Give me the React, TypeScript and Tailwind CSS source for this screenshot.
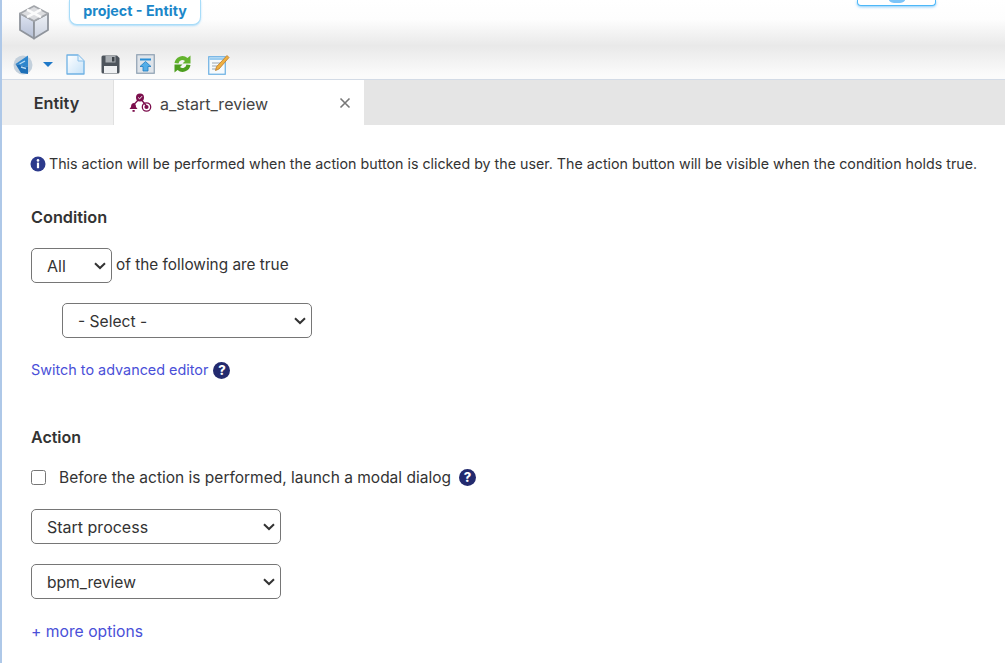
// Entity editor: header with toolbar, tab strip, and the action form below.

import type { ReactNode } from "react";

const inter = "font-['Inter','Noto_Sans',sans-serif]";

function BoxLogo() {
  return (
    <svg width="32" height="35" viewBox="0 0 32 35" aria-hidden>
      <defs>
        <linearGradient id="boxL" x1="0" y1="0" x2="0" y2="1">
          <stop offset="0" stopColor="#dfe5f2" />
          <stop offset="1" stopColor="#b4bed4" />
        </linearGradient>
        <linearGradient id="boxR" x1="0" y1="0" x2="0" y2="1">
          <stop offset="0" stopColor="#eef1f6" />
          <stop offset="1" stopColor="#cad1df" />
        </linearGradient>
      </defs>
      <path d="M16 16 L2 8.5 V25 L16 33.5 Z" fill="url(#boxL)" stroke="#8f949c" strokeWidth="1.8" strokeLinejoin="round" />
      <path d="M16 16 L30 8.5 V25 L16 33.5 Z" fill="url(#boxR)" stroke="#8f949c" strokeWidth="1.8" strokeLinejoin="round" />
      <path d="M2 8.5 L16 1 L30 8.5 L16 16 Z" fill="#dcdde0" stroke="#a3a6ab" strokeWidth="1.6" strokeLinejoin="round" />
      <path d="M9 4.7 L23 12.2 M23 4.7 L9 12.2" stroke="#fbfbfb" strokeWidth="2.6" />
    </svg>
  );
}

function BackIcon() {
  return (
    <svg width="20" height="21" viewBox="0 0 20 21" aria-hidden>
      <circle cx="10" cy="11" r="9.5" fill="#c3d0dc" />
      <path d="M15 1.5 L2.5 10 L15 13 Z" fill="#2e86cd" />
      <path d="M2.5 10 L15 13 V20 L8 19 Z" fill="#1d6fb8" />
      <path d="M6.5 10 L12 7 M8 13 L13 14.5" stroke="#b9dcf4" strokeWidth="1.4" />
    </svg>
  );
}

function PageIcon() {
  return (
    <svg width="19" height="21" viewBox="0 0 19 21" aria-hidden>
      <defs>
        <linearGradient id="page" x1="0" y1="0" x2="1" y2="1">
          <stop offset="0" stopColor="#ffffff" />
          <stop offset="1" stopColor="#c6e2f8" />
        </linearGradient>
      </defs>
      <path d="M1 1 H12 L18 7 V20 H1 Z" fill="url(#page)" stroke="#6fb1e4" strokeWidth="1.3" strokeLinejoin="round" />
      <path d="M12 1 V7 H18" fill="#e6f2fb" stroke="#8cc1ea" strokeWidth="1" />
    </svg>
  );
}

function SaveIcon() {
  return (
    <svg width="19" height="19" viewBox="0 0 19 19" aria-hidden>
      <path d="M0.5 2 Q0.5 0.5 2 0.5 H16 L18.5 3 V17 Q18.5 18.5 17 18.5 H2 Q0.5 18.5 0.5 17 Z" fill="#4d545c" />
      <rect x="4.5" y="1" width="10" height="6.5" fill="#a9aeb3" />
      <rect x="11" y="2" width="2.5" height="4.5" fill="#3d4349" />
      <rect x="3" y="11" width="13" height="7" fill="#eef0f2" />
    </svg>
  );
}

function PublishIcon() {
  return (
    <svg width="19" height="20" viewBox="0 0 19 20" aria-hidden>
      <rect x="0.75" y="0.75" width="17.5" height="18.5" fill="#dfe4ea" stroke="#8ea0b2" strokeWidth="1.2" />
      <rect x="4" y="4.5" width="11" height="2" fill="#2b8fd6" />
      <path d="M9.5 7.5 L15 12.5 H12 V17 H7 V12.5 H4 Z" fill="#54aee8" stroke="#1f7cc2" strokeWidth="0.8" />
    </svg>
  );
}

function RefreshIcon() {
  return (
    <svg width="19" height="18" viewBox="0 0 19 18" aria-hidden>
      <path d="M1.5 8 A8 8 0 0 1 14.5 3 L17.5 0.5 V8.5 H9.5 L12 6 A4 4 0 0 0 5.5 8.5 Z" fill="#63b32e" />
      <path d="M17.5 10 A8 8 0 0 1 4.5 15 L1.5 17.5 V9.5 H9.5 L7 12 A4 4 0 0 0 13.5 9.5 Z" fill="#4d9e1f" />
    </svg>
  );
}

function NoteIcon() {
  return (
    <svg width="22" height="21" viewBox="0 0 22 21" aria-hidden>
      <rect x="0.75" y="2.75" width="16.5" height="17.5" fill="#f6fafd" stroke="#69aee2" strokeWidth="1.2" />
      <rect x="1.5" y="3.5" width="15" height="2.5" fill="#9ccdf0" />
      <path d="M4 9 H12 M4 12 H10 M4 15 H9" stroke="#9aa7b2" strokeWidth="1" />
      <path d="M19 1.5 L21 3.5 L11 15 L7.5 16.5 L8.5 12.8 Z" fill="#f0b040" stroke="#b9792a" strokeWidth="0.8" strokeLinejoin="round" />
    </svg>
  );
}

function ActionIcon() {
  return (
    <svg width="24" height="20" viewBox="0 0 24 20" aria-hidden>
      <path d="M12 5 L5.5 12 M12 5 L18.5 13" stroke="#7c0f4d" strokeWidth="1.3" />
      <circle cx="12" cy="4.5" r="4" fill="#7c0f4d" />
      <path d="M10.2 4.5 L11.6 5.9 L14 3.2" stroke="#fff" strokeWidth="1" fill="none" />
      <path d="M5.5 10 Q8 10.5 8 14 L9.5 16 H1.5 L3 14 Q3 10.5 5.5 10 Z" fill="#7c0f4d" />
      <rect x="4.5" y="17" width="2.2" height="1.8" fill="#7c0f4d" />
      <circle cx="18.5" cy="14" r="4.2" fill="none" stroke="#7c0f4d" strokeWidth="1.3" />
      <circle cx="18.5" cy="14" r="2.1" fill="#7c0f4d" />
    </svg>
  );
}

function InfoDot() {
  return (
    <svg width="16" height="16" viewBox="0 0 16 16" aria-hidden>
      <circle cx="8" cy="8" r="7.5" fill="#2c3a8c" />
      <circle cx="8" cy="4.4" r="1.3" fill="#fff" />
      <rect x="6.9" y="6.6" width="2.2" height="5.6" fill="#fff" />
    </svg>
  );
}

function HelpDot() {
  return (
    <span className="inline-flex h-[17px] w-[17px] shrink-0 items-center justify-center rounded-full bg-[#232a6e] text-[13px] font-extrabold leading-none text-white">
      ?
    </span>
  );
}

// Native select with the chevron drawn on top, so its weight matches the picture.
function SelectBox({
  width,
  children,
  className = "",
  textSize = "pt-[1px] text-[16px]",
}: {
  width: string;
  children: ReactNode;
  className?: string;
  textSize?: string;
}) {
  return (
    <div className={`relative h-[35px] ${width} ${className}`}>
      <select className={`h-full w-full appearance-none rounded-[5px] border border-[#767676] bg-white pl-[15px] text-[#333] outline-none ${textSize}`}>
        {children}
      </select>
      <svg className="pointer-events-none absolute right-[6px] top-[14px]" width="12" height="8" viewBox="0 0 12 8" aria-hidden>
        <path d="M1 1.2 L6 6 L11 1.2" fill="none" stroke="#333" strokeWidth="2" />
      </svg>
    </div>
  );
}

export default function App() {
  return (
    <div className={`${inter} flex h-[663px] w-[1005px] flex-col overflow-hidden border-l-2 border-[#aec8e8] bg-white text-[#333]`}>
      <header className="h-[80px] shrink-0 border-b border-[#d3dbe6] bg-[linear-gradient(to_bottom,#ffffff_0%,#fdfdfd_25%,#e9e9e9_58%,#fbfbfb_95%)]">
        <div className="flex h-[53px] items-start">
          <div className="ml-[16px] mt-[5px]">
            <BoxLogo />
          </div>
          <div className="ml-[19px] flex h-[25px] w-[132px] items-center justify-center rounded-b-[8px] border border-t-0 border-[#a8dcf8] bg-white text-[14.3px] font-bold text-[#1b87c9] shadow-[0_1px_2px_rgba(120,200,250,0.6)]">
            <span className="mt-[-3px]">project - Entity</span>
          </div>
          <div className="ml-auto mr-[69px] flex h-[6px] w-[79px] justify-center overflow-hidden rounded-b-[4px] border border-t-0 border-[#4db8f8] bg-white shadow-[0_1px_3px_rgba(80,180,250,0.7)]">
            <span className="mt-[-9px] h-[12px] w-[18px] rounded-full bg-[#7cc4f8]" />
          </div>
        </div>
        <div className="flex h-[22px] items-center pl-[11px]">
          <BackIcon />
          <span className="ml-[10px] h-0 w-0 border-x-[5px] border-t-[5px] border-x-transparent border-t-[#1e78c8]" />
          <span className="ml-[13px] flex"><PageIcon /></span>
          <span className="ml-[16px] flex"><SaveIcon /></span>
          <span className="ml-[16px] flex"><PublishIcon /></span>
          <span className="ml-[18px] flex"><RefreshIcon /></span>
          <span className="ml-[16px] flex"><NoteIcon /></span>
        </div>
      </header>

      <nav className="flex h-[45px] shrink-0 bg-[#e5e5e5]">
        <div className="flex w-[112px] items-center justify-center border-r border-[#e0e0e0] bg-[#efefef] pr-[2px] pt-[1px] text-[16.3px] font-semibold text-[#333]">
          Entity
        </div>
        <div className="flex w-[250px] items-center bg-white pl-[14px] pr-[13px]">
          <ActionIcon />
          <span className="ml-[8px] mt-[2px] text-[16px] text-[#444]">a_start_review</span>
          <svg className="ml-auto" width="12" height="12" viewBox="0 0 12 12" aria-hidden>
            <path d="M1.5 1.5 L10.5 10.5 M10.5 1.5 L1.5 10.5" stroke="#777" strokeWidth="1.6" />
          </svg>
        </div>
      </nav>

      <main className="flex-1 pl-[28px]">
        <div className="mt-[30px] flex h-[18px] items-center gap-[3px] whitespace-nowrap text-[14.25px]">
          <InfoDot />
          <span>This action will be performed when the action button is clicked by the user. The action button will be visible when the condition holds true.</span>
        </div>

        <div className="pl-[1px]">
          <h2 className="mt-[35px] text-[16.3px] font-semibold leading-[18px] text-[#333]">Condition</h2>
          <div className="mt-[22px] flex h-[35px] items-center">
            <SelectBox width="w-[81px]">
              <option>All</option>
              <option>Any</option>
            </SelectBox>
            <span className="mb-[1px] ml-[4px] text-[15.35px]">of the following are true</span>
          </div>
          <SelectBox width="w-[250px]" className="ml-[31px] mt-[20px]" textSize="pt-[3px] text-[15.6px]">
            <option>- Select -</option>
          </SelectBox>
          <div className="mt-[22px] flex h-[20px] items-center gap-[5px]">
            <a className="text-[14.4px] text-[#4a50d8]">Switch to advanced editor</a>
            <HelpDot />
          </div>

          <h2 className="mt-[48px] text-[16px] font-semibold leading-[18px] text-[#333]">Action</h2>
          <div className="mt-[21px] flex h-[20px] items-center">
            <input type="checkbox" className="h-[15px] w-[15px]" />
            <span className="ml-[13px] mt-[1px] text-[15.5px]">Before the action is performed, launch a modal dialog</span>
            <span className="ml-[8px] flex"><HelpDot /></span>
          </div>
          <SelectBox width="w-[250px]" className="mt-[22px]">
            <option>Start process</option>
          </SelectBox>
          <SelectBox width="w-[250px]" className="mt-[20px]" textSize="pt-[3px] text-[15.6px]">
            <option>bpm_review</option>
          </SelectBox>
          <a className="mt-[23px] block text-[15.7px] leading-[20px] text-[#4a50d8]">+ more options</a>
        </div>
      </main>
    </div>
  );
}
